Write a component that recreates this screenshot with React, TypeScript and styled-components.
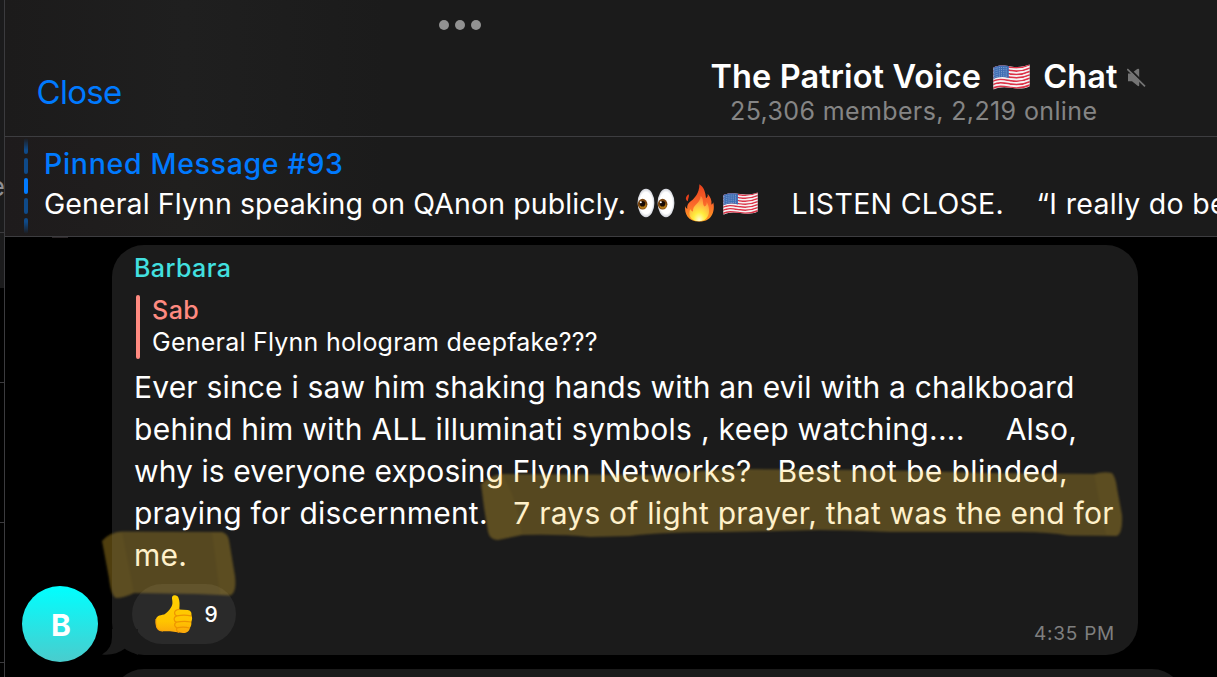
import React from "react";
import styled, { createGlobalStyle } from "styled-components";

const GlobalStyle = createGlobalStyle`
  * {
    box-sizing: border-box;
  }

  body {
    margin: 0;
    background: #000000;
    color: #ffffff;
    font-family: Inter, "Liberation Sans", sans-serif;
  }
`;

const Screen = styled.div`
  position: relative;
  display: flex;
  width: 1217px;
  height: 677px;
  overflow: hidden;
  background: #000000;
`;

const Sidebar = styled.div`
  flex: none;
  width: 5px;
  overflow: hidden;
  border-right: 1px solid #3b3b3e;
  background: linear-gradient(#1b1b1c 288px, #000000 288px);
`;

const SidebarCell = styled.div<{ height: number }>`
  display: flex;
  align-items: flex-end;
  justify-content: flex-end;
  height: ${(props) => props.height}px;
  border-bottom: 1px solid #3b3b3e;
`;

const SidebarText = styled.span`
  margin: 0 -1px 29px 0;
  color: #8e8e93;
  font-size: 26px;
  line-height: 32px;
`;

const Main = styled.div`
  flex: 1;
  min-width: 0;
  overflow: hidden;
`;

const Header = styled.div`
  height: 137px;
  padding-top: 20px;
  border-bottom: 1px solid #3d3d40;
  background: linear-gradient(90deg, #1c1b1b, #1f1f1f 180px, #1b1b1b 380px);
`;

const Dots = styled.div`
  display: flex;
  gap: 6px;
  padding-left: 434px;
`;

const Dot = styled.div`
  width: 10px;
  height: 10px;
  border-radius: 50%;
  background: #929292;
`;

const NavRow = styled.div`
  display: flex;
  align-items: flex-start;
`;

const CloseButton = styled.button`
  width: 674px;
  margin: 42px 0 0 31.5px;
  padding: 0;
  border: 0;
  background: none;
  color: #007aff;
  font-family: inherit;
  font-size: 33px;
  line-height: 40px;
  letter-spacing: -0.7px;
  text-align: left;
`;

const TitleBlock = styled.div`
  margin-top: 30px;
  white-space: nowrap;
`;

const Title = styled.div`
  display: flex;
  align-items: center;
  height: 34px;
  font-size: 32.5px;
  font-weight: 600;
  line-height: 34px;
  letter-spacing: 0.1px;

  svg {
    margin: -1px 13px 0 12px;
  }

  svg:last-child {
    margin: 0 0 0 9px;
  }
`;

const Subtitle = styled.div`
  margin: 3px 0 0 19.5px;
  color: #858585;
  font-size: 25px;
  line-height: 28px;
  letter-spacing: 0.38px;
`;

const PinnedBar = styled.div`
  display: flex;
  height: 100px;
  padding: 1px 0 0 19px;
  border-bottom: 1px solid #3d3d40;
  background: linear-gradient(90deg, #1e1b1c, #201f1e 180px, #1b1b1b 380px);
`;

const PinMarks = styled.div`
  display: flex;
  flex: none;
  flex-direction: column;
  gap: 4px;
  width: 4px;
  height: 96px;
  mask-image: linear-gradient(transparent, #000 12px, #000 84px, transparent);
`;

const PinMark = styled.div<{ active?: boolean }>`
  height: 16px;
  border-radius: 2px;
  background: ${(props) => (props.active ? "#007aff" : "#0f4a89")};
`;

const PinnedContent = styled.div`
  flex: none;
  padding: 7px 0 0 16px;
  font-size: 28.5px;
  white-space: nowrap;
`;

const PinnedTitle = styled.div`
  color: #007aff;
  font-weight: 500;
  line-height: 37px;
  letter-spacing: 0.68px;
`;

const PinnedText = styled.div`
  display: flex;
  align-items: center;
  height: 43px;
  line-height: 43px;
  letter-spacing: 0.1px;

  svg {
    flex: none;
  }
`;

const PinnedEmojis = styled.span`
  display: flex;
  align-items: center;
  gap: 8px;
  margin: -1px 0 0 11px;
`;

const PinnedPart = styled.span<{ gap: number }>`
  margin-left: ${(props) => props.gap}px;
  letter-spacing: 0.3px;
`;

const Chat = styled.div`
  position: relative;
  height: 440px;
  padding-top: 8px;
  background: #000000;
`;

const AvatarSliver = styled.div`
  position: absolute;
  top: 0;
  left: 47px;
  width: 16px;
  height: 1px;
  background: #2c2729;
`;

const MessageRow = styled.div`
  display: flex;
  align-items: flex-end;
`;

const Avatar = styled.div`
  display: flex;
  align-items: center;
  justify-content: center;
  width: 76px;
  height: 76px;
  margin: 0 14px -7px 17px;
  padding: 2px 0 0 2px;
  border-radius: 50%;
  background: linear-gradient(#00ffff, #4acccd);
  font-size: 30px;
  font-weight: 700;
  line-height: 36px;
`;

const Bubble = styled.div`
  position: relative;
  width: 1026px;
  height: 410px;
  padding: 8px 23px 0 22px;
  border-radius: 32px;
  background: #1b1b1b;
`;

const Tail = styled.svg`
  position: absolute;
  bottom: 0;
  left: -10px;
`;

const NextBubble = styled.div`
  width: 1072px;
  height: 80px;
  margin: 14px 0 0 107px;
  border-radius: 32px;
  background: #1b1b1b;
`;

const Sender = styled.div`
  color: #42e0e0;
  font-size: 25px;
  font-weight: 500;
  line-height: 30px;
  letter-spacing: 0.43px;
`;

const Reply = styled.div`
  display: flex;
  height: 64px;
  margin: 12px 0 7px 2px;

  &::before {
    content: "";
    width: 4px;
    margin-right: 12px;
    border-radius: 2px;
    background: #ff8a80;
  }
`;

const ReplyName = styled.div`
  color: #ff8a80;
  font-size: 25px;
  font-weight: 500;
  line-height: 30px;
  letter-spacing: 0.5px;
`;

const ReplyText = styled.div`
  font-size: 25px;
  line-height: 34px;
  letter-spacing: 0.23px;
`;

const Line = styled.div`
  display: flex;
  height: 42px;
  font-size: 30px;
  line-height: 42px;
  white-space: pre;
`;

const Phrase = styled.span<{ spacing: number; gap?: number }>`
  margin-left: ${(props) => props.gap || 0}px;
  letter-spacing: ${(props) => props.spacing}px;
`;

const Footer = styled.div`
  display: flex;
  align-items: flex-end;
  justify-content: space-between;
  margin: 8px 0 0 -2px;
`;

const Reaction = styled.div`
  display: flex;
  align-items: center;
  gap: 11.5px;
  width: 104px;
  height: 60px;
  padding-left: 23px;
  border-radius: 30px;
  background: #2a2a2a;
  font-size: 21px;
  font-weight: 500;
`;

const Time = styled.div`
  margin-bottom: -2px;
  color: #7f7f7f;
  font-size: 19px;
  line-height: 24px;
  letter-spacing: 0.75px;
`;

const Marker = styled.svg`
  position: absolute;
  top: 0;
  left: 0;
  pointer-events: none;
`;

const stripes = Array.from({ length: 13 }, (_, i) => i);

const wave = (y: number) =>
  `M-1 ${y + 1.2} C5 ${y - 2.4} 11 ${y - 1} 18 ${y + 0.2} S31 ${y + 0.6} 38 ${y - 2.8}`;

const Flag = ({ id, width, height }: { id: string; width: number; height: number }) => (
  <svg width={width} height={height} viewBox="0 0 37 26" preserveAspectRatio="none">
    <defs>
      <clipPath id={id}>
        <path d="M.5 3.4C6 .6 11 1.2 18 2.4S31 2.8 36.5 .5V22.4C31 25 25 25 18 23.8S6 23 .5 25.6Z" />
      </clipPath>
    </defs>
    <g clipPath={`url(#${id})`}>
      <rect width="37" height="26" fill="#f4f1f2" />
      {stripes.map((i) => (
        <path key={i} d={wave(3.1 + i * 1.69)} fill="none" stroke={i % 2 ? "#f6f2f3" : "#dc3348"} strokeWidth="1.75" />
      ))}
      <path d="M0 0H15.8V14C10 12.4 5 12.8 0 15.4Z" fill="#3f6db3" />
      {[0, 1, 2, 3, 4].map((r) => (
        <path key={r} d={`M1.5 ${5 + r * 2.1}Q7 ${2.6 + r * 2.1} 15 ${4 + r * 2.1}`} fill="none" stroke="#b9cce6" strokeWidth=".8" strokeDasharray=".9 1.4" />
      ))}
    </g>
  </svg>
);

const Eyes = () => (
  <svg width="39" height="30" viewBox="0 0 39 30">
    <defs>
      <radialGradient id="eyeball">
        <stop offset=".75" stopColor="#ffffff" />
        <stop offset="1" stopColor="#cfd1d8" />
      </radialGradient>
    </defs>
    {[9, 29].map((x) => (
      <g key={x}>
        <ellipse cx={x} cy="15" rx="8.4" ry="14.2" fill="url(#eyeball)" />
        <ellipse cx={x - 3.4} cy="16.2" rx="4.8" ry="5.4" fill="#7a4611" />
        <ellipse cx={x - 3} cy="17.8" rx="3.4" ry="3" fill="#b07818" />
        <circle cx={x - 3.5} cy="15.8" r="2.8" fill="#180c06" />
        <circle cx={x - 5.2} cy="14.2" r="1" fill="#ffffff" />
      </g>
    ))}
  </svg>
);

const Fire = () => (
  <svg width="31" height="38" viewBox="0 0 31 38">
    <defs>
      <linearGradient id="flame" x1="0" y1="0" x2="0" y2="1">
        <stop offset="0" stopColor="#e8401c" />
        <stop offset=".55" stopColor="#fb6a2b" />
        <stop offset="1" stopColor="#ff9f1f" />
      </linearGradient>
      <radialGradient id="core" cx=".5" cy=".95" r=".85">
        <stop offset="0" stopColor="#fffbd0" />
        <stop offset=".35" stopColor="#ffee3d" />
        <stop offset=".75" stopColor="#ffb340" />
        <stop offset="1" stopColor="#ff8c3c" />
      </radialGradient>
    </defs>
    <path d="M15.4.2C20 3.2 21.4 8 22 14.2C23.8 13 24 11.6 23.6 9.8C26.4 12.8 28 16.6 27.4 20.6C28.6 20 29 19.2 29.2 18.2C31 24.4 29.8 37.6 15.2 37.6C4 37.6.2 29.6 1.2 22C1.8 23.8 2.4 24.4 3.4 24.8C2.6 21.4 4.6 18.8 7 17C10.6 14.2 15.4 9 15.4.2Z" fill="url(#flame)" />
    <path d="M4.8 10.2C5.4 12.8 4 14 3.8 17.2C1 15.8 1.4 12.4 4.8 10.2Z" fill="#e8401c" />
    <path d="M16.8 12C20.4 15.8 17.8 19.8 20.6 22.6C22.4 21.8 23 19.8 22.6 18C26.6 23.6 26.8 37.2 15.2 37.2C5.8 37.2 4 30.2 6.2 25C7 26.6 7.8 27.2 9 27.6C8.4 20.6 15.8 20.2 16.8 12Z" fill="url(#core)" />
  </svg>
);

const ThumbsUp = () => (
  <svg width="38" height="40" viewBox="0 0 38 40">
    <defs>
      <linearGradient id="skin" x1="0" y1="0" x2="0" y2="1">
        <stop offset="0" stopColor="#ffd000" />
        <stop offset=".7" stopColor="#ffc400" />
        <stop offset="1" stopColor="#fba60b" />
      </linearGradient>
    </defs>
    <path
      d="M20 1.2C17.6 1 16.8 2.4 17 4.4C17.6 8 17.8 10.4 16.4 12.8C14.4 16.2 12 18.8 9.2 20.4C4 21.2 1.4 22 1 25.4C.6 29 .8 33 3.2 35.6C6.4 38.2 11 37 15 37.2L28 39C31.4 39.2 34.4 37.6 34.8 34C36.4 32 36.6 30 36.2 28C37.4 25.8 37.4 23.6 36.4 21.6C37 18.6 35.6 16.4 32.6 16L24.2 15.4C24.8 11.4 24.8 6.8 23.4 3.6C22.8 2 21.6 1.3 20 1.2Z"
      fill="url(#skin)"
    />
    <path
      d="M24.2 15.4C21.6 15.6 19.6 17 19.6 19C19.6 20.6 20.6 21.6 22 21.8C19.8 22.4 19 24 19.2 25.6C19.4 27 20.2 27.8 21.4 28.2C19.8 29 19.4 30.4 19.8 31.8C20.2 33 21 33.6 22 33.8C21 35.2 21.4 37.2 23.6 38.2M22 21.8Q29 20.4 36 21.8M21.4 28.2Q29 26.6 36 28M22 33.8Q29 32.4 34.6 34"
      fill="none"
      stroke="#ee9500"
      strokeWidth="1.2"
      strokeLinecap="round"
    />
    <path d="M1 25C.6 33 2.4 37 8 36.9" fill="none" stroke="#f5a20a" strokeWidth="1.2" />
  </svg>
);

const MutedIcon = () => (
  <svg width="19" height="19" viewBox="0 0 19 19">
    <path d="M1 5.6H4.4L10.2.9Q12.2.1 12.2 1.8V17.2Q12.2 18.9 10.6 17.8L5 13.2H1Z" fill="#747474" />
    <path d="M1.2 -.5L19 17.3" stroke="#1b1b1b" strokeWidth="2" />
    <path d="M.3 1L18 18.3" stroke="#747474" strokeWidth="1.7" />
  </svg>
);

// Hand-drawn marker strokes, in screen coordinates
const Highlights = () => (
  <Marker width="1217" height="677" viewBox="0 0 1217 677">
    <defs>
      <filter id="soft" x="-5%" y="-20%" width="110%" height="140%" colorInterpolationFilters="sRGB">
        <feGaussianBlur stdDeviation="1.1" />
      </filter>
    </defs>
    <g fill="#ffca32" filter="url(#soft)">
      <g fillOpacity=".263">
        <path d="M481 484Q490 475 502 474L660 475Q700 470 742 469L860 470Q930 471 985 473L1094 474Q1104 471 1112 473Q1116 478 1117 488L1122 515Q1123 533 1117 536L1068 535.5Q1050 532 1020 532L890 532Q850 530 820 530L730 532Q660 532 630 536L590 537Q560 534 522 535L498 540Q490 540 488 532L484 508Z" />
        <path d="M102 541Q110 532 122 531.5L222 532Q228 534 229 540L235 576Q237 593 230 595.5L196 594L134 593Q124 598 116 598Q111 596 109 578Z" />
      </g>
      <g fillOpacity=".035">
        <path d="M481 484L502 474Q518 500 522 535L498 540Q490 540 488 532Z" />
        <path d="M1094 474Q1104 471 1112 473Q1116 478 1117 488L1122 515Q1123 533 1117 536L1106 535Z" />
        <path d="M102 541Q110 532 122 531.5L134 593Q124 598 116 598Q111 596 109 578Z" />
        <path d="M212 532L222 532Q228 534 229 540L235 576Q237 593 230 595.5L220 595Z" />
      </g>
    </g>
    <path d="M102 541Q108 534 112 533V595Q110 588 109 578Z" fill="#ffca32" fillOpacity=".04" />
  </Marker>
);

const App = () => {
  return (
    <Screen>
      <GlobalStyle />
      <Sidebar>
        <SidebarCell height={233}>
          <SidebarText>e</SidebarText>
        </SidebarCell>
        <SidebarCell height={150} />
        <SidebarCell height={140} />
        <SidebarCell height={140} />
      </Sidebar>
      <Main>
        <Header>
          <Dots>
            <Dot />
            <Dot />
            <Dot />
          </Dots>
          <NavRow>
            <CloseButton>Close</CloseButton>
            <TitleBlock>
              <Title>
                The Patriot Voice
                <Flag id="flag-title" width={37} height={26} />
                Chat
                <MutedIcon />
              </Title>
              <Subtitle>25,306 members, 2,219 online</Subtitle>
            </TitleBlock>
          </NavRow>
        </Header>
        <PinnedBar>
          <PinMarks>
            <PinMark />
            <PinMark />
            <PinMark active />
            <PinMark />
            <PinMark />
          </PinMarks>
          <PinnedContent>
            <PinnedTitle>Pinned Message #93</PinnedTitle>
            <PinnedText>
              General Flynn speaking on QAnon publicly.
              <PinnedEmojis>
                <Eyes />
                <Fire />
                <Flag id="flag-pinned" width={35} height={23} />
              </PinnedEmojis>
              <PinnedPart gap={33.5}>LISTEN CLOSE.</PinnedPart>
              <PinnedPart gap={32.5}>“I really do be</PinnedPart>
            </PinnedText>
          </PinnedContent>
        </PinnedBar>
        <Chat>
          <AvatarSliver />
          <MessageRow>
            <Avatar>B</Avatar>
            <Bubble>
              <Tail width="36" height="26" viewBox="0 0 36 26">
                <path d="M10 0V8Q10 20 0 25.6Q13 27 23 19.6L36 26V0Z" fill="#1b1b1b" />
              </Tail>
              <Sender>Barbara</Sender>
              <Reply>
                <div>
                  <ReplyName>Sab</ReplyName>
                  <ReplyText>General Flynn hologram deepfake???</ReplyText>
                </div>
              </Reply>
              <Line>
                <Phrase spacing={0.18}>Ever since i saw him shaking hands with an evil with a chalkboard</Phrase>
              </Line>
              <Line>
                <Phrase spacing={0.28}>behind him with ALL illuminati symbols , keep watching....</Phrase>
                <Phrase spacing={0.2} gap={41}>Also,</Phrase>
              </Line>
              <Line>
                <Phrase spacing={0.09}>why is everyone exposing Flynn Networks?</Phrase>
                <Phrase spacing={0.38} gap={26}>Best not be blinded,</Phrase>
              </Line>
              <Line>
                <Phrase spacing={0.23}>praying for discernment.</Phrase>
                <Phrase spacing={0.23} gap={25.5}>7 rays of light prayer, that was the end for</Phrase>
              </Line>
              <Line>
                <Phrase spacing={0.3}>me.</Phrase>
              </Line>
              <Footer>
                <Reaction>
                  <ThumbsUp />
                  9
                </Reaction>
                <Time>4:35 PM</Time>
              </Footer>
            </Bubble>
          </MessageRow>
          <NextBubble />
        </Chat>
      </Main>
      <Highlights />
    </Screen>
  );
};

export default App;
